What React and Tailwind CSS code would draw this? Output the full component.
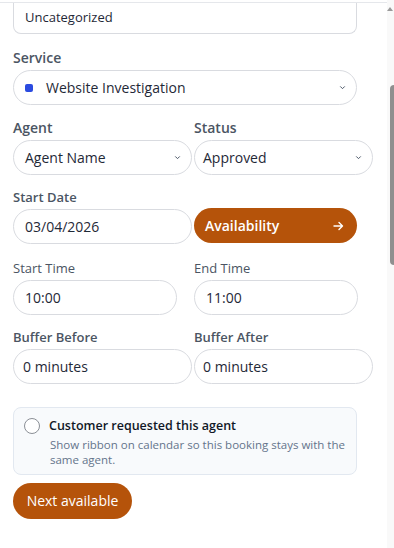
import React from "react";

const font = { fontFamily: "'Open Sans', 'Noto Sans', sans-serif" };

function Chevron() {
  return (
    <svg width="9" height="9" viewBox="0 0 10 10" className="text-gray-600">
      <path d="M2.5 3.8 L5 6.3 L7.5 3.8" fill="none" stroke="currentColor" strokeWidth="1.1" />
    </svg>
  );
}

function Label({ children, light }) {
  return (
    <div className={`text-[13px] leading-none mb-[5px] text-[#4b5563] ${light ? "font-normal" : "font-semibold"}`}>
      {children}
    </div>
  );
}

function BigLabel({ children }) {
  return <div className="text-[14px] leading-none mb-[5px] font-semibold text-[#4b5563]">{children}</div>;
}

function Field({ children, className = "" }) {
  return (
    <div className={`h-[35px] rounded-full border border-[#d9dbe0] bg-white flex items-center px-[11px] text-[14px] text-[#1f2937] ${className}`}>
      {children}
    </div>
  );
}

export default function App() {
  return (
    <div className="w-[394px] h-[548px] bg-white flex overflow-hidden" style={font}>
      <div className="flex-1 flex flex-col pl-[13px] pr-[14px] border-t border-[#e5e7eb] mt-[2px]">
        <div className="w-[344px] h-[31px] rounded-b-lg border border-t-0 border-[#d9dbe0] flex items-center pl-[11px] text-[13px] text-[#1f2937]">
          Uncategorized
        </div>

        <div className="mt-[17px]">
          <BigLabel>Service</BigLabel>
          <Field className="w-[344px] h-[33px] pr-[9px]">
            <span className="w-[8px] h-[8px] rounded-[2px] bg-[#2b4be0] mr-[13px]" />
            <span className="flex-1">Website Investigation</span>
            <Chevron />
          </Field>
        </div>

        <div className="mt-[16px] grid grid-cols-[179px_179px] gap-x-[2px]">
          <div>
            <BigLabel>Agent</BigLabel>
            <Field className="pr-[9px] justify-between">
              <span>Agent Name</span>
              <Chevron />
            </Field>
          </div>
          <div>
            <BigLabel>Status</BigLabel>
            <Field className="pl-[8px] pr-[9px] justify-between">
              <span>Approved</span>
              <Chevron />
            </Field>
          </div>
        </div>

        <div className="mt-[16px]">
          <Label>Start Date</Label>
          <div className="flex gap-[2px]">
            <Field className="w-[179px]">03/04/2026</Field>
            <button className="w-[163px] h-[35px] -mt-[1px] rounded-full bg-[#b5530a] text-white text-[14px] font-semibold flex items-center justify-between pl-[11px] pr-[13px]">
              <span>Availability</span>
              <svg width="11" height="10" viewBox="0 0 11 10">
                <path d="M1 5 H9.5 M6 1.5 L9.5 5 L6 8.5" fill="none" stroke="white" strokeWidth="1.4" strokeLinecap="round" strokeLinejoin="round" />
              </svg>
            </button>
          </div>
        </div>

        <div className="mt-[18px] grid grid-cols-[164px_164px] gap-x-[17px]">
          <div>
            <Label light>Start Time</Label>
            <Field className="h-[33px]">10:00</Field>
          </div>
          <div>
            <Label light>End Time</Label>
            <Field className="h-[33px]">11:00</Field>
          </div>
        </div>

        <div className="mt-[16px] grid grid-cols-[179px_179px] gap-x-[2px]">
          <div>
            <Label>Buffer Before</Label>
            <Field className="h-[34px] pl-[9px]">0 minutes</Field>
          </div>
          <div>
            <Label>Buffer After</Label>
            <Field className="h-[34px] pl-[8px]">0 minutes</Field>
          </div>
        </div>

        <div className="mt-[23px] w-[344px] rounded-lg border border-[#e2e8f0] bg-[#f8fafc] pt-[9px] pb-[7px] pl-[10px] pr-[10px]">
          <div className="flex items-center gap-[9px]">
            <span className="w-[16px] h-[16px] rounded-full border border-[#8b8f96] bg-white" />
            <span className="text-[12.5px] font-semibold text-[#111827]">Customer requested this agent</span>
          </div>
          <div className="pl-[26px] mt-[1px] text-[11.5px] leading-[15px] text-[#64748b]">
            Show ribbon on calendar so this booking stays with the same agent.
          </div>
        </div>

        <button className="mt-[8px] w-[119px] h-[36px] rounded-full bg-[#b5530a] text-white text-[14px] font-medium">
          Next available
        </button>
      </div>

      <div className="w-[7px] bg-[#f9f9f9] flex flex-col items-end">
        <div className="mt-[7px] mr-[1px] w-0 h-0 border-l-[3px] border-r-[3px] border-b-[4px] border-l-transparent border-r-transparent border-b-[#9a9a9a]" />
        <div className="mt-[74px] w-[4px] h-[180px] rounded-l-sm bg-[#8f8f8f]" />
      </div>
    </div>
  );
}
